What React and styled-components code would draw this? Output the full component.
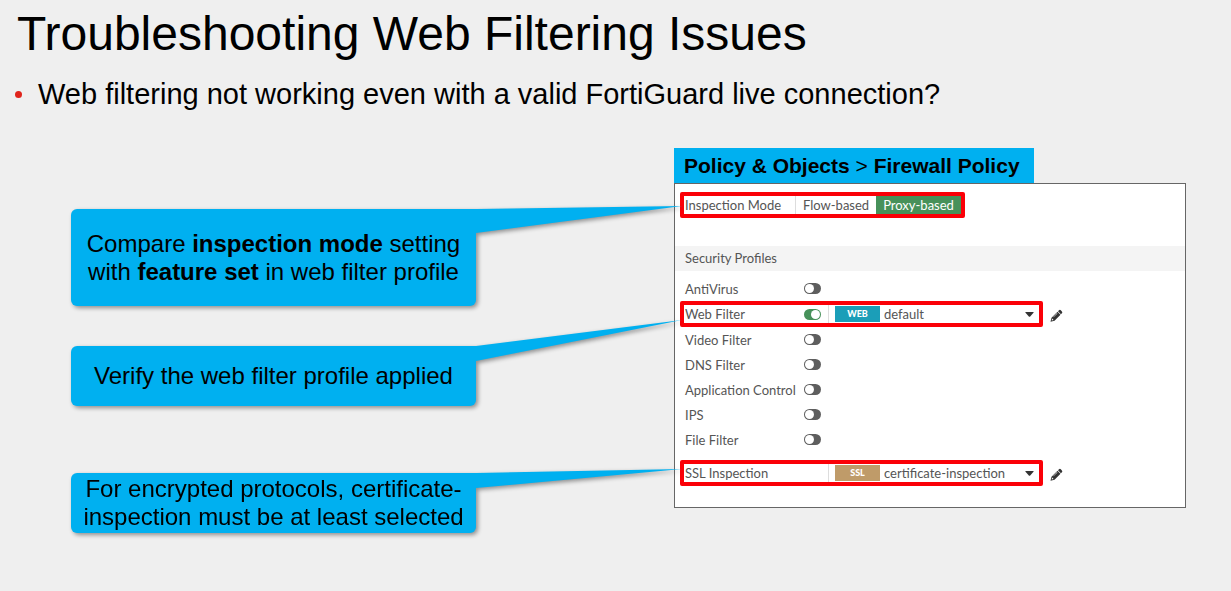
import React from "react";
import styled, { createGlobalStyle } from "styled-components";

const GlobalStyle = createGlobalStyle`
  *, *::before, *::after { box-sizing: border-box; }
  body {
    margin: 0;
    background: #efefef;
    color: #000;
    font-family: "Liberation Sans", Arial, sans-serif;
  }
`;

const Slide = styled.main`
  padding: 6px 0 24px;
`;

const Title = styled.h1`
  margin: 0 17px;
  font-size: 48px;
  line-height: 56px;
  font-weight: 400;
`;

const Points = styled.ul`
  list-style: none;
  margin: 16px 15px 38px;
  padding: 0;
`;

const Point = styled.li`
  display: flex;
  align-items: center;
  gap: 16px;
  font-size: 29px;
  line-height: 32px;

  &::before {
    content: "";
    flex: none;
    width: 7px;
    height: 7px;
    border-radius: 50%;
    background: #e0241c;
  }
`;

const Columns = styled.div`
  display: grid;
  grid-template-columns: minmax(0, 405fr) minmax(0, 512fr);
  column-gap: 198px;
  margin: 0 45px 0 71px;
`;

const Callouts = styled.div`
  position: relative;
  z-index: 1;
  display: flex;
  flex-direction: column;
  padding-top: 61px;
`;

const CalloutBox = styled.div`
  position: relative;
  display: flex;
  align-items: center;
  justify-content: center;
  min-height: ${(p) => (p.$tall ? 97 : 60)}px;
  margin-bottom: ${(p) => (p.$tall ? 40 : 67)}px;
  padding: 0 8px;
  border-radius: 6px;
  background: #00b0f0;
  filter: drop-shadow(2px 2px 2px rgba(0, 0, 0, 0.4));
  font-size: 24px;
  line-height: 28px;
  text-align: center;

  &:last-child { margin-bottom: 0; }

  p { margin: 0; }
`;

const Pointer = styled.svg`
  position: absolute;
  left: calc(100% - 6px);
  top: 0;
  width: 212px;
  height: 40px;
  overflow: visible;
  fill: #00b0f0;
`;

const Breadcrumb = styled.h2`
  width: fit-content;
  margin: 0;
  padding: 0 14px 0 10px;
  background: #00b0f0;
  font-size: 21px;
  line-height: 35px;
  font-weight: 700;

  span { font-weight: 400; }
`;

const Panel = styled.form`
  border: 1px solid #666;
  background: #fff;
  color: #555;
  padding: 8px 0 21px;
  font-family: Lato, sans-serif;
  font-size: 13px;
  line-height: 18px;
`;

const Marked = styled.div`
  display: flex;
  align-items: stretch;
  width: ${(p) => (p.$short ? 285 : 363)}px;
  height: 26px;
  padding-left: 1px;
  border: 4px solid #fb0007;
  border-radius: 2px;
`;

const SettingRow = styled.div`
  display: flex;
  align-items: center;
  padding-left: 5px;
`;

const ModeSet = styled.fieldset`
  display: contents;
`;

const ModeName = styled.span`
  width: 111px;
  border-right: 1px solid #ddd;
`;

const ModeOption = styled.label`
  flex: ${(p) => (p.$on ? "1" : "none")};
  padding: 0 7px;
  background: ${(p) => (p.$on ? "#47915a" : "#fff")};
  color: ${(p) => (p.$on ? "#fff" : "#555")};
  white-space: nowrap;

  input {
    position: absolute;
    opacity: 0;
    pointer-events: none;
  }
`;

const SectionTitle = styled.h3`
  margin: 28px 0 5px;
  padding: 0 10px;
  background: #f4f4f4;
  font-size: 13px;
  line-height: 25px;
  font-weight: 400;
`;

const Name = styled.label`
  flex: none;
  width: 119px;
  white-space: nowrap;
`;

const ProfileRow = styled.div`
  display: flex;
  align-items: center;
  height: 25px;
  padding-left: 10px;
`;

const Toggle = styled.input.attrs({ type: "checkbox" })`
  appearance: none;
  flex: none;
  align-self: center;
  display: flex;
  width: 17px;
  height: 11px;
  margin: 0;
  padding: 1px;
  border-radius: 6px;
  background: #5e5e5e;

  &::before {
    content: "";
    width: 9px;
    height: 9px;
    border-radius: 50%;
    background: #fff;
  }

  &:checked {
    justify-content: flex-end;
    background: #47915a;
  }
`;

const Picker = styled.div`
  position: relative;
  display: flex;
  flex: 1;
  align-items: center;
  margin-left: ${(p) => (p.$wide ? 24 : 7)}px;
  padding-left: 6px;
  border-left: 1px solid #ddd;

  svg {
    position: absolute;
    right: 5px;
    width: 9px;
    height: 5px;
    fill: #333;
    pointer-events: none;
  }
`;

const Tag = styled.span`
  flex: none;
  width: 45px;
  background: ${(p) => p.$color};
  color: #fff;
  font-size: 9px;
  line-height: 16px;
  font-weight: 900;
  text-align: center;
`;

const Select = styled.select`
  appearance: none;
  flex: 1;
  min-width: 0;
  border: 0;
  margin: 0;
  padding: 0 16px 0 4px;
  background: transparent;
  color: #555;
  font: inherit;
`;

const EditButton = styled.button`
  display: flex;
  margin: 2px 0 0 7px;
  padding: 0;
  border: 0;
  background: none;

  svg {
    width: 13px;
    height: 13px;
    fill: #333;
  }
`;

const Gap = styled.div`
  height: 8px;
`;

function Callout({ tall, tail, children }) {
  return (
    <CalloutBox $tall={tall}>
      <Pointer viewBox="0 0 212 40" aria-hidden="true">
        <polygon points={tail} />
      </Pointer>
      <p>{children}</p>
    </CalloutBox>
  );
}

function ProfilePicker({ id, tag, color, value, wide }) {
  return (
    <Picker $wide={wide}>
      <Tag $color={color}>{tag}</Tag>
      <Select id={id} aria-label={`${tag} profile`} defaultValue={value}>
        <option>{value}</option>
      </Select>
      <svg viewBox="0 0 9 5" aria-hidden="true">
        <path d="M0.8 0h7.4q.8 0 .3.7L5.2 4.5q-.7.7-1.4 0L.5.7Q0 0 .8 0z" />
      </svg>
    </Picker>
  );
}

function Edit({ label }) {
  return (
    <EditButton type="button" aria-label={label}>
      <svg viewBox="0 0 13 13" aria-hidden="true">
        <path d="M9 1.3q.9-.9 1.8 0l1.1 1.1q.9.9 0 1.8l-1 1-2.9-2.9z" />
        <path
          fillRule="evenodd"
          d="M7.5 2.7l3 3-6 6L.5 12.7l1-4zM2.1 9.6l-.4 1.9 1.9-.5zM7.1 4.1L3.2 8l.3.3 3.9-3.9z"
        />
      </svg>
    </EditButton>
  );
}

function ToggleRow({ name }) {
  const id = name.toLowerCase().replace(/ /g, "-");
  return (
    <ProfileRow>
      <Name htmlFor={id}>{name}</Name>
      <Toggle id={id} />
    </ProfileRow>
  );
}

export default function App() {
  return (
    <>
      <GlobalStyle />
      <Slide>
        <Title>Troubleshooting Web Filtering Issues</Title>
        <Points>
          <Point>Web filtering not working even with a valid FortiGuard live connection?</Point>
        </Points>
        <Columns>
          <Callouts>
            <Callout tall tail="0,0 6,0 212,-3 6,24 0,24">
              Compare <b>inspection mode</b> setting with <b>feature set</b> in web filter profile
            </Callout>
            <Callout tail="0,0 6,0 212,-26 6,15 0,15">Verify the web filter profile applied</Callout>
            <Callout tail="0,0 6,0 212,-4 6,15 0,15">
              For encrypted protocols, certificate-inspection must be at least selected
            </Callout>
          </Callouts>
          <section>
            <Breadcrumb>
              Policy &amp; Objects <span>&gt;</span> Firewall Policy
            </Breadcrumb>
            <Panel>
              <SettingRow>
                <Marked $short>
                  <ModeSet aria-label="Inspection Mode">
                    <ModeName>Inspection Mode</ModeName>
                    <ModeOption>
                      <input type="radio" name="mode" />
                      Flow-based
                    </ModeOption>
                    <ModeOption $on>
                      <input type="radio" name="mode" defaultChecked />
                      Proxy-based
                    </ModeOption>
                  </ModeSet>
                </Marked>
              </SettingRow>
              <SectionTitle>Security Profiles</SectionTitle>
              <ToggleRow name="AntiVirus" />
              <SettingRow>
                <Marked>
                  <Name htmlFor="web-filter">Web Filter</Name>
                  <Toggle id="web-filter" defaultChecked />
                  <ProfilePicker id="web-profile" tag="WEB" color="#1b9eb8" value="default" />
                </Marked>
                <Edit label="Edit web filter profile" />
              </SettingRow>
              <ToggleRow name="Video Filter" />
              <ToggleRow name="DNS Filter" />
              <ToggleRow name="Application Control" />
              <ToggleRow name="IPS" />
              <ToggleRow name="File Filter" />
              <Gap />
              <SettingRow>
                <Marked>
                  <Name htmlFor="ssl-profile">SSL Inspection</Name>
                  <ProfilePicker wide id="ssl-profile" tag="SSL" color="#bf9b69" value="certificate-inspection" />
                </Marked>
                <Edit label="Edit SSL inspection profile" />
              </SettingRow>
            </Panel>
          </section>
        </Columns>
      </Slide>
    </>
  );
}
